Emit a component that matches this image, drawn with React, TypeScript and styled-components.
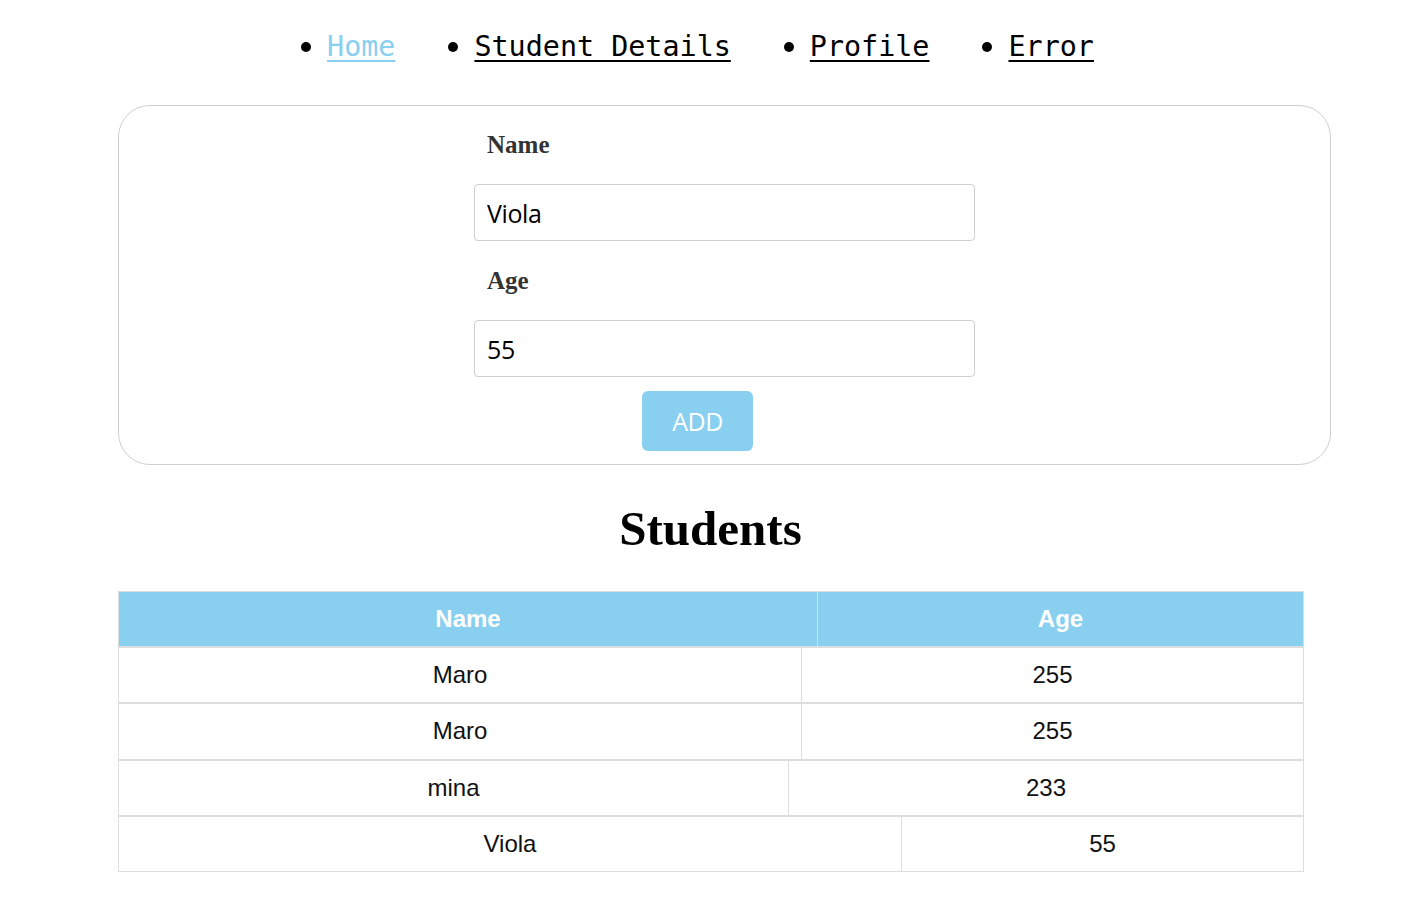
import React from "react";
import styled, { createGlobalStyle } from "styled-components";

const GlobalStyle = createGlobalStyle`
  html, body {
    margin: 0;
    padding: 0;
    background: #fff;
  }
  * {
    box-sizing: border-box;
  }
`;

const SKY = "#89cff0";

interface Student {
  name: string;
  age: number;
  split: number;
}

const students: Student[] = [
  { name: "Maro", age: 255, split: 682 },
  { name: "Maro", age: 255, split: 682 },
  { name: "mina", age: 233, split: 669 },
  { name: "Viola", age: 55, split: 782 },
];

const Page = styled("div")`
  display: flex;
  flex-direction: column;
  padding: 0 0 40px 118px;
`;

const Nav = styled("ul")`
  display: flex;
  justify-content: center;
  gap: 53px;
  list-style: none;
  margin: 30px 0 0 -118px;
  padding: 0 26px 0 0;
  font: 28.4px/33px "DejaVu Sans Mono", monospace;
`;

const NavItem = styled("li")`
  display: flex;
  align-items: center;
  gap: 16px;

  &::before {
    content: "";
    width: 10px;
    height: 10px;
    border-radius: 50%;
    background: #000;
  }
`;

const NavLink = styled("a")<{ $active?: boolean }>`
  color: ${({ $active }) => ($active ? SKY : "#000")};
  text-decoration: underline;
  text-underline-offset: 4px;
  cursor: pointer;
`;

const FormBox = styled("form")`
  display: flex;
  flex-direction: column;
  align-items: center;
  width: 1213px;
  margin-top: 42px;
  padding: 25px 0 13px;
  border: 1.5px solid #cfcfcf;
  border-radius: 32px;
`;

const Field = styled("div")`
  display: flex;
  flex-direction: column;
  width: 501px;
  margin-bottom: 26px;

  &:last-of-type {
    margin-bottom: 14px;
  }
`;

const Label = styled("label")`
  margin: 0 0 25px 13px;
  font: bold 25px/28px "Liberation Serif", serif;
  color: #333;
`;

const Input = styled("input")`
  height: 57px;
  padding: 0 12px;
  border: 1px solid #cfcfcf;
  border-radius: 4px;
  font: 25px "Open Sans", sans-serif;
  color: #000;
  letter-spacing: -0.4px;
  outline: none;
`;

const AddButton = styled("button")`
  width: 111px;
  height: 60px;
  margin-right: 54px;
  border: none;
  border-radius: 6px;
  background: ${SKY};
  color: #fff;
  font: 25px "Open Sans", sans-serif;
  letter-spacing: -0.5px;
  cursor: pointer;
`;

const Title = styled("h1")`
  margin: 36px 0 34px -118px;
  text-align: center;
  font: bold 49px/56px "Liberation Serif", serif;
  color: #000;
`;

const Rows = styled("div")`
  display: flex;
  flex-direction: column;
  width: 1186px;
`;

const Row = styled("div")<{ $head?: boolean }>`
  display: grid;
  height: 56.2px;
  border: 1px solid #dddddd;
  background: ${({ $head }) => ($head ? SKY : "#fff")};
  font: ${({ $head }) => ($head ? "bold" : "normal")} 24px "Liberation Sans", Arial, sans-serif;
  color: ${({ $head }) => ($head ? "#fff" : "#111")};
`;

const Cell = styled("div")`
  display: flex;
  align-items: center;
  justify-content: center;

  & + & {
    border-left: 1px solid #dddddd;
  }
`;

export default function App() {
  return (
    <Page>
      <GlobalStyle />
      <Nav>
        <NavItem>
          <NavLink $active>Home</NavLink>
        </NavItem>
        <NavItem>
          <NavLink>Student Details</NavLink>
        </NavItem>
        <NavItem>
          <NavLink>Profile</NavLink>
        </NavItem>
        <NavItem>
          <NavLink>Error</NavLink>
        </NavItem>
      </Nav>

      <FormBox onSubmit={(e) => e.preventDefault()}>
        <Field>
          <Label>Name</Label>
          <Input defaultValue="Viola" />
        </Field>
        <Field>
          <Label>Age</Label>
          <Input defaultValue="55" />
        </Field>
        <AddButton type="submit">ADD</AddButton>
      </FormBox>

      <Title>Students</Title>

      <Rows>
        <Row $head style={{ gridTemplateColumns: "698px 1fr" }}>
          <Cell>Name</Cell>
          <Cell>Age</Cell>
        </Row>
        {students.map((s, i) => (
          <Row key={i} style={{ gridTemplateColumns: `${s.split}px 1fr` }}>
            <Cell>{s.name}</Cell>
            <Cell>{s.age}</Cell>
          </Row>
        ))}
      </Rows>
    </Page>
  );
}
